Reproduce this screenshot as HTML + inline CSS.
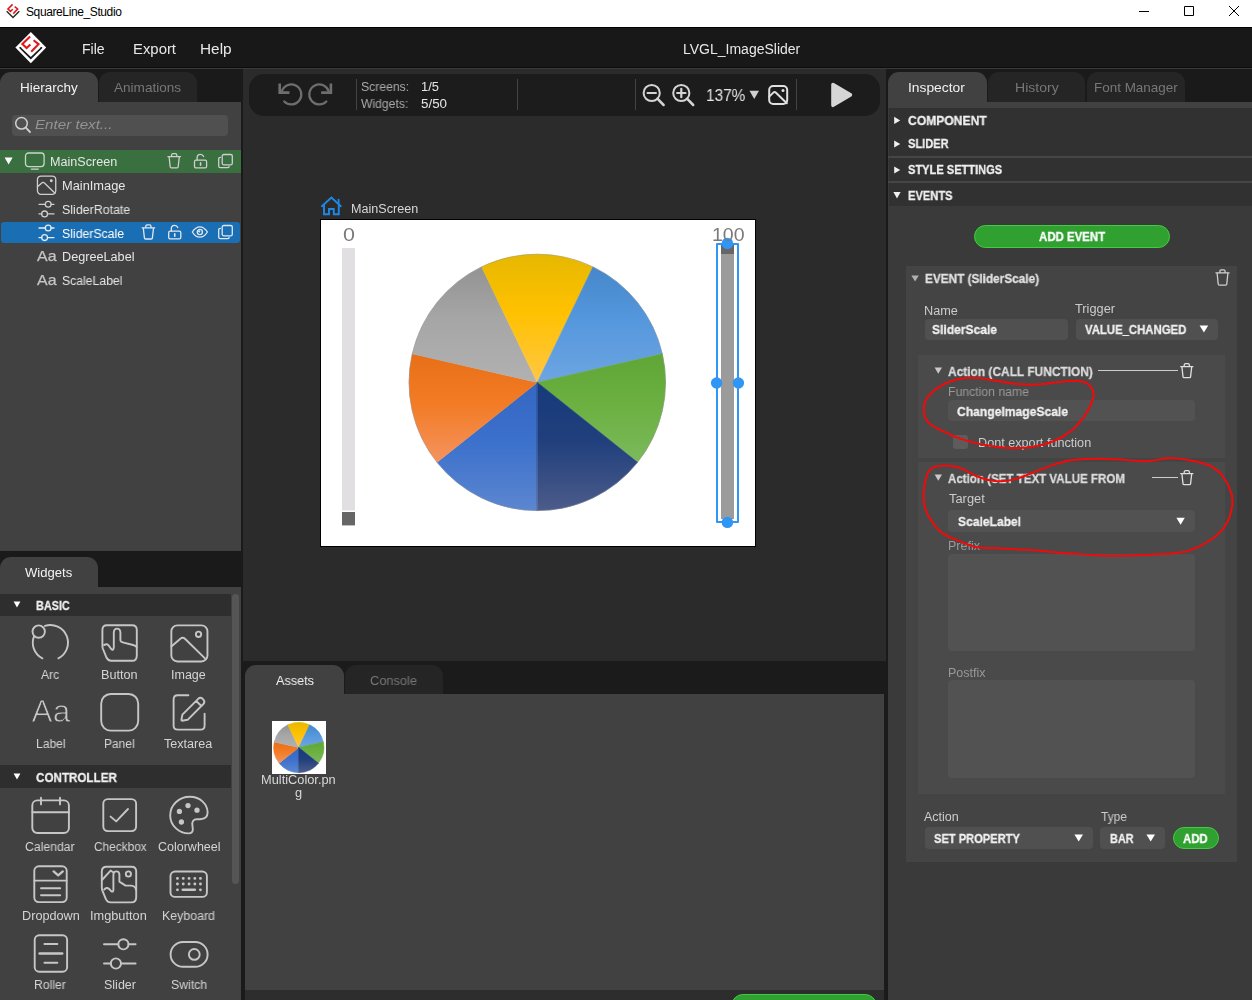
<!DOCTYPE html>
<html lang="en">
<head>
<meta charset="utf-8">
<title>SquareLine_Studio</title>
<style>
*{box-sizing:border-box;margin:0;padding:0}
html,body{width:1252px;height:1000px;overflow:hidden;background:#2b2b2b}
body{font-family:"Liberation Sans",sans-serif}
#app{position:relative;width:1252px;height:1000px;overflow:hidden;background:#2b2b2b}
.b{position:absolute}
.t{position:absolute;white-space:pre;will-change:transform;transform-origin:0 0}
.t.lcd{will-change:auto}
svg{position:absolute;overflow:visible;will-change:transform}
.ic{fill:none;stroke:#d0d0d0;stroke-width:1.5;stroke-linecap:round;stroke-linejoin:round}

</style>
</head>
<body>
<div id="app">
<!-- title bar -->
<div class="b" style="left:0;top:0;width:1252px;height:27px;background:#fff"><span style="position:absolute;left:26px;top:6px;font-size:12px;line-height:12px;color:#000;white-space:pre;letter-spacing:-0.39px">SquareLine_Studio</span></div>
<!-- menu bar -->
<div class="b" style="left:0;top:27px;width:1252px;height:41px;background:#181818"></div>
<div class="b" style="left:0;top:27px;width:1252px;height:1px;background:#000"></div>
<div class="b" style="left:0;top:67px;width:1252px;height:1px;background:#0c0c0c"></div>
<div class="b" style="left:0;top:68px;width:1252px;height:1px;background:#3a3a3a"></div>
<!-- left column -->
<div class="b" style="left:0;top:69px;width:243px;height:931px;background:#1a1a1a"></div>
<div class="b" style="left:0;top:72px;width:98px;height:30px;background:#414141;border-radius:11px 11px 0 0"></div>
<div class="b" style="left:99px;top:72px;width:98px;height:30px;background:#252525;border-radius:11px 11px 0 0"></div>
<div class="b" style="left:0;top:102px;width:241px;height:449px;background:#414141"></div>
<div class="b" style="left:12px;top:115px;width:216px;height:21px;background:#505050;border-radius:4px"></div>
<div class="b" style="left:0;top:150px;width:241px;height:23px;background:#3a6f40"></div>
<div class="b" style="left:1px;top:222px;width:239px;height:21px;background:#1a6eb4;border-radius:3px"></div>
<!-- widgets panel -->
<div class="b" style="left:0;top:557px;width:98px;height:30px;background:#414141;border-radius:11px 11px 0 0"></div>
<div class="b" style="left:0;top:587px;width:241px;height:413px;background:#414141"></div>
<div class="b" style="left:0;top:594px;width:231px;height:22px;background:#2e2e2e"></div>
<div class="b" style="left:0;top:765px;width:231px;height:23px;background:#2e2e2e"></div>
<div class="b" style="left:232px;top:594px;width:7px;height:290px;background:#555;border-radius:4px"></div>
<!-- centre -->
<div class="b" style="left:243px;top:69px;width:643px;height:592px;background:#2b2b2b"></div>
<div class="b" style="left:249px;top:74px;width:631px;height:42px;background:#1c1c1c;border-radius:15px"></div>
<div class="b" style="left:356px;top:79px;width:1px;height:31px;background:#444"></div>
<div class="b" style="left:517px;top:79px;width:1px;height:31px;background:#444"></div>
<div class="b" style="left:635px;top:79px;width:1px;height:31px;background:#444"></div>
<div class="b" style="left:796px;top:79px;width:1px;height:31px;background:#444"></div>
<!-- canvas -->
<div class="b" style="left:320px;top:219px;width:436px;height:328px;background:#000"></div>
<div class="b" style="left:321px;top:220px;width:434px;height:326px;background:#fff"></div>
<!-- assets panel -->
<div class="b" style="left:243px;top:661px;width:643px;height:339px;background:#1b1b1b"></div>
<div class="b" style="left:245px;top:665px;width:99px;height:29px;background:#414141;border-radius:11px 11px 0 0"></div>
<div class="b" style="left:345px;top:665px;width:98px;height:29px;background:#252525;border-radius:11px 11px 0 0"></div>
<div class="b" style="left:245px;top:694px;width:639px;height:296px;background:#414141"></div>
<div class="b" style="left:245px;top:990px;width:639px;height:10px;background:#2d2d2d"></div>
<div class="b" style="left:731px;top:994px;width:146px;height:24px;background:#30a030;border:1.5px solid #42cc42;border-radius:12px"></div>
<div class="b" style="left:272px;top:721px;width:53.5px;height:53px;background:#fff"></div>
<!-- right panel -->
<div class="b" style="left:886px;top:69px;width:366px;height:931px;background:#1a1a1a"></div>
<div class="b" style="left:888px;top:72px;width:99px;height:30px;background:#414141;border-radius:11px 11px 0 0"></div>
<div class="b" style="left:988px;top:72px;width:97px;height:30px;background:#252525;border-radius:11px 11px 0 0"></div>
<div class="b" style="left:1087px;top:72px;width:98px;height:30px;background:#252525;border-radius:11px 11px 0 0"></div>
<div class="b" style="left:888px;top:102px;width:364px;height:898px;background:#3a3a3a"></div>
<div class="b" style="left:888px;top:102px;width:364px;height:6px;background:#414141"></div>
<div class="b" style="left:889px;top:108px;width:363px;height:48px;background:#313131"></div>
<div class="b" style="left:888px;top:156px;width:364px;height:2px;background:#464646"></div>
<div class="b" style="left:889px;top:158px;width:363px;height:23px;background:#313131"></div>
<div class="b" style="left:888px;top:181px;width:364px;height:2px;background:#464646"></div>
<div class="b" style="left:889px;top:183px;width:363px;height:23px;background:#313131"></div>
<div class="b" style="left:974px;top:225px;width:196px;height:23px;background:#30a030;border:1.5px solid #42cc42;border-radius:12px"></div>
<div class="b" style="left:906px;top:266px;width:331px;height:596px;background:#444"></div>
<div class="b" style="left:925px;top:319px;width:143px;height:21px;background:#505050;border-radius:4px"></div>
<div class="b" style="left:1076px;top:319px;width:142px;height:21px;background:#505050;border-radius:4px"></div>
<div class="b" style="left:918px;top:355px;width:307px;height:103px;background:#4a4a4a"></div>
<div class="b" style="left:948px;top:400px;width:247px;height:21px;background:#525252;border-radius:4px"></div>
<div class="b" style="left:953px;top:435px;width:15px;height:14px;background:#5c5c5c;border-radius:3px"></div>
<div class="b" style="left:1098px;top:370px;width:80px;height:1px;background:#ccc"></div>
<div class="b" style="left:918px;top:462px;width:307px;height:332px;background:#4a4a4a"></div>
<div class="b" style="left:948px;top:510px;width:247px;height:22px;background:#525252;border-radius:4px"></div>
<div class="b" style="left:948px;top:554px;width:247px;height:97px;background:#525252;border-radius:4px"></div>
<div class="b" style="left:948px;top:680px;width:247px;height:98px;background:#525252;border-radius:4px"></div>
<div class="b" style="left:1152px;top:477px;width:26px;height:1px;background:#ccc"></div>
<div class="b" style="left:925px;top:827px;width:168px;height:22px;background:#505050;border-radius:4px"></div>
<div class="b" style="left:1100px;top:827px;width:65px;height:22px;background:#505050;border-radius:4px"></div>
<div class="b" style="left:1173px;top:827px;width:46px;height:22px;background:#30a030;border:1.5px solid #42cc42;border-radius:11px"></div>
<svg id="ov" width="1252" height="1000" viewBox="0 0 1252 1000" style="left:0;top:0" fill="none" stroke-linecap="round" stroke-linejoin="round"><path d="M1139 11.5H1149M1184.5 6.5H1193.5V15.5H1184.5ZM1229 6L1239 16M1239 6L1229 16" stroke="#000" stroke-width="1" stroke-linecap="butt"/>
<g transform="translate(13 11.1) scale(0.6)"><path d="M-10.5 0.4L0 10.6L10.5 0.4" stroke="#2a2a2a" stroke-width="2.4" stroke-linecap="butt" stroke-linejoin="miter"/><path d="M-0.7 -11.2L-8.4 -3.5L-4.2 0.5L-0.4 -3M2.8 -7.4L7.7 -3.5L0.4 4.2" stroke="#e01818" stroke-width="2.6" stroke-linejoin="miter" stroke-linecap="butt"/></g>
<g transform="translate(30.8 47.6)"><path d="M0 -15.7L15.4 0L0 15.7L-15.4 0Z" fill="#fff" stroke="none"/><path d="M-10.5 -0.6V0.4L0 10.6L10.5 0.4V-0.6" stroke="#181818" stroke-width="1.7" stroke-linecap="butt" stroke-linejoin="miter"/><path d="M-0.7 -11.2L-8.4 -3.5L-4.2 0.5L-0.4 -3M2.8 -7.4L7.7 -3.5L0.4 4.2" stroke="#e01818" stroke-width="2.1" stroke-linejoin="miter" stroke-linecap="butt"/></g>
<g transform="translate(0 0)" stroke="#cfcfcf" stroke-width="1.5" ><circle cx="21.5" cy="123.3" r="5.8"/><path d="M25.8 127.7L30 132" stroke-width="1.8"/></g>
<path d="M4.6 157.6H12.6L8.6 164.6Z" fill="#fff" stroke="none"/>
<g transform="translate(24.8 152.3)" stroke="#c9d6ca" stroke-width="1.3" ><rect x="0.7" y="0.7" width="18.6" height="13.6" rx="3"/><path d="M6.5 16.8H13.5"/></g>
<g transform="translate(167.2 153)" stroke="#cfcfcf" stroke-width="1.3" ><path d="M0.7 3.6H13.3M4.4 3.4V2.2Q4.4 0.7 5.8 0.7H8.2Q9.6 0.7 9.6 2.2V3.4M1.9 3.8L3 13.7Q3.1 14.8 4.2 14.8H9.8Q10.9 14.8 11 13.7L12.1 3.8"/></g>
<g transform="translate(193.8 153.6)" stroke="#cfcfcf" stroke-width="1.3" ><rect x="0.7" y="6.6" width="12.1" height="7.7" rx="1.5"/><path d="M3.3 6.4V4.2Q3.3 0.8 6.6 0.8Q9 0.8 9.8 2.9"/><path d="M6.75 9.3V11.6" stroke-width="1.6"/></g>
<g transform="translate(218 153.8)" stroke="#cfcfcf" stroke-width="1.3" ><rect x="4.2" y="0.7" width="10.1" height="10.3" rx="1.6"/><path d="M2.4 3.6Q0.7 3.6 0.7 5.3V12.1Q0.7 13.8 2.4 13.8H9.4Q11.1 13.8 11.1 12.6"/></g>
<g transform="translate(36.8 175.4)" stroke="#cfcfcf" stroke-width="1.3" ><rect x="0.65" y="0.65" width="18.3" height="18.3" rx="3.5"/><path d="M0.65 11.37L5.29 7.25Q6.47 6.47 7.64 7.55L18.23 17.93"/><circle cx="14.50" cy="5.29" r="1.47" fill="#cfcfcf" stroke="none"/></g>
<g transform="translate(0 0)" stroke="#cfcfcf" stroke-width="1.3" ><path d="M39 204.3H45.30M51.10 204.3H54M39 213.9H41.70M47.50 213.9H54"/><circle cx="48.20" cy="204.3" r="2.9"/><circle cx="44.60" cy="213.9" r="2.9"/></g>
<g transform="translate(0 0)" stroke="#e6eef6" stroke-width="1.3" ><path d="M39 228H45.30M51.10 228H54M39 237.6H41.70M47.50 237.6H54"/><circle cx="48.20" cy="228" r="2.9"/><circle cx="44.60" cy="237.6" r="2.9"/></g>
<g transform="translate(141.4 224.2)" stroke="#dfe8f0" stroke-width="1.3" ><path d="M0.7 3.6H13.3M4.4 3.4V2.2Q4.4 0.7 5.8 0.7H8.2Q9.6 0.7 9.6 2.2V3.4M1.9 3.8L3 13.7Q3.1 14.8 4.2 14.8H9.8Q10.9 14.8 11 13.7L12.1 3.8"/></g>
<g transform="translate(168 224.6)" stroke="#dfe8f0" stroke-width="1.3" ><rect x="0.7" y="6.6" width="12.1" height="7.7" rx="1.5"/><path d="M3.3 6.4V4.2Q3.3 0.8 6.6 0.8Q9 0.8 9.8 2.9"/><path d="M6.75 9.3V11.6" stroke-width="1.6"/></g>
<g transform="translate(191.6 226)" stroke="#dfe8f0" stroke-width="1.3" ><path d="M0.7 6Q4 0.8 8.25 0.8Q12.5 0.8 15.8 6Q12.5 11.2 8.25 11.2Q4 11.2 0.7 6Z"/><circle cx="8.25" cy="6" r="2.6"/><circle cx="7.6" cy="5.4" r="0.5"/></g>
<g transform="translate(218 224.8)" stroke="#dfe8f0" stroke-width="1.3" ><rect x="4.2" y="0.7" width="10.1" height="10.3" rx="1.6"/><path d="M2.4 3.6Q0.7 3.6 0.7 5.3V12.1Q0.7 13.8 2.4 13.8H9.4Q11.1 13.8 11.1 12.6"/></g>
<text x="37" y="261" font-family="'Liberation Sans',sans-serif" font-size="15" fill="#c4c4c4" stroke="#c4c4c4" stroke-width="0.25" textLength="19.5" lengthAdjust="spacingAndGlyphs">Aa</text>
<text x="37" y="285" font-family="'Liberation Sans',sans-serif" font-size="15" fill="#c4c4c4" stroke="#c4c4c4" stroke-width="0.25" textLength="19.5" lengthAdjust="spacingAndGlyphs">Aa</text>
<g transform="translate(291.3 94.4)" stroke="#6e6e6e" stroke-width="2.2"><path d="M-9.56 -2.92A10 10 0 1 1 -7.07 7.07"/><path d="M-11.60 -11.00V-1.8H-1.80" stroke-width="2.6" stroke-linecap="butt" stroke-linejoin="miter"/></g>
<g transform="translate(319.3 94.4) scale(-1 1)" stroke="#6e6e6e" stroke-width="2.2"><path d="M-9.56 -2.92A10 10 0 1 1 -7.07 7.07"/><path d="M-11.60 -11.00V-1.8H-1.80" stroke-width="2.6" stroke-linecap="butt" stroke-linejoin="miter"/></g>
<g transform="translate(0 0)" stroke="#d4d4d4" stroke-width="2.0" ><circle cx="651.7" cy="93" r="8.1"/><path d="M657.43 98.73L663.6 105" stroke-width="2.5"/><path d="M647.5 93H655.9000000000001" stroke-width="2.2"/></g>
<g transform="translate(0 0)" stroke="#d4d4d4" stroke-width="2.0" ><circle cx="681.3" cy="93" r="8.1"/><path d="M687.03 98.73L693.2 105" stroke-width="2.5"/><path d="M677.0999999999999 93H685.5M681.3 88.8V97.2" stroke-width="2.2"/></g>
<path d="M749.5 90.8H759.0L754.25 99.0Z" fill="#cfcfcf" stroke="none"/>
<g transform="translate(768.2 85)" stroke="#e0e0e0" stroke-width="2.0" ><rect x="1.0" y="1.0" width="18.0" height="18.0" rx="4"/><path d="M1.0 11.60L5.40 7.40Q6.60 6.60 7.80 7.70L18.60 18.30"/><circle cx="14.80" cy="5.40" r="1.50" fill="#e0e0e0" stroke="none"/></g>
<path d="M833 84.6L850.4 94.9L833 105.3Z" fill="#d6d6d6" stroke="#d6d6d6" stroke-width="3.6" stroke-linejoin="round"/>
<g transform="translate(321 196.6)" stroke="#1e88e5" stroke-width="1.9" ><path d="M0.9 9.6L10.4 0.9L19.9 9.6" stroke-linejoin="miter"/><path d="M17.6 7.2V3.2"/><path d="M3 8.4V17.6H8V12.4H12.8V17.6H17.8V8.4" stroke-linejoin="miter"/></g>
<rect x="342" y="248" width="13" height="262.5" fill="#e2dfe3"/><rect x="342" y="512" width="13" height="13.4" fill="#666"/>
<rect x="721" y="245" width="13" height="274" fill="#9b9b9b"/><rect x="721" y="245" width="13" height="9" fill="#666"/>
<defs><linearGradient id="pb" x1="0" y1="0" x2="0" y2="1"><stop offset="0" stop-color="#3567c2"/><stop offset="0.45" stop-color="#3b70cc"/><stop offset="1" stop-color="#5c86d0"/></linearGradient><linearGradient id="po" x1="0" y1="0" x2="0" y2="1"><stop offset="0" stop-color="#e66f17"/><stop offset="0.45" stop-color="#f27b23"/><stop offset="1" stop-color="#f5935f"/></linearGradient><linearGradient id="pg" x1="0" y1="0" x2="0" y2="1"><stop offset="0" stop-color="#939393"/><stop offset="0.45" stop-color="#a6a6a6"/><stop offset="1" stop-color="#b1b1b1"/></linearGradient><linearGradient id="py" x1="0" y1="0" x2="0" y2="1"><stop offset="0" stop-color="#e6b800"/><stop offset="0.45" stop-color="#ffc100"/><stop offset="1" stop-color="#ffc744"/></linearGradient><linearGradient id="pl" x1="0" y1="0" x2="0" y2="1"><stop offset="0" stop-color="#4687cb"/><stop offset="0.45" stop-color="#5597dc"/><stop offset="1" stop-color="#6ca5e2"/></linearGradient><linearGradient id="pn" x1="0" y1="0" x2="0" y2="1"><stop offset="0" stop-color="#5fa636"/><stop offset="0.45" stop-color="#6bb040"/><stop offset="1" stop-color="#7cb95c"/></linearGradient><linearGradient id="pd" x1="0" y1="0" x2="0" y2="1"><stop offset="0" stop-color="#173a7c"/><stop offset="0.45" stop-color="#203f7c"/><stop offset="1" stop-color="#4c5c8a"/></linearGradient></defs><path d="M537.30 382.40L537.30 510.60A128.2 128.2 0 0 1 437.07 462.33Z" fill="url(#pb)" stroke="url(#pb)" stroke-width="0.6" stroke-linejoin="round"/><path d="M537.30 382.40L437.07 462.33A128.2 128.2 0 0 1 412.31 353.87Z" fill="url(#po)" stroke="url(#po)" stroke-width="0.6" stroke-linejoin="round"/><path d="M537.30 382.40L412.32 353.87A128.2 128.2 0 0 1 481.68 266.89Z" fill="url(#pg)" stroke="url(#pg)" stroke-width="0.6" stroke-linejoin="round"/><path d="M537.30 382.40L481.68 266.89A128.2 128.2 0 0 1 592.93 266.90Z" fill="url(#py)" stroke="url(#py)" stroke-width="0.6" stroke-linejoin="round"/><path d="M537.30 382.40L592.92 266.89A128.2 128.2 0 0 1 662.28 353.86Z" fill="url(#pl)" stroke="url(#pl)" stroke-width="0.6" stroke-linejoin="round"/><path d="M537.30 382.40L662.28 353.87A128.2 128.2 0 0 1 637.53 462.33Z" fill="url(#pn)" stroke="url(#pn)" stroke-width="0.6" stroke-linejoin="round"/><path d="M537.30 382.40L637.53 462.33A128.2 128.2 0 0 1 537.30 510.60Z" fill="url(#pd)" stroke="url(#pd)" stroke-width="0.6" stroke-linejoin="round"/><circle cx="537.3" cy="382.4" r="128.2" fill="none" stroke="#8a8f96" stroke-opacity="0.55" stroke-width="0.8"/>
<rect x="717" y="244" width="21" height="278" fill="none" stroke="#2f96f6" stroke-width="2"/>
<circle cx="727.4" cy="243.4" r="5.7" fill="#2f96f6"/>
<circle cx="727.4" cy="522.4" r="5.7" fill="#2f96f6"/>
<circle cx="716.6" cy="383" r="5.7" fill="#2f96f6"/>
<circle cx="738.4" cy="383" r="5.7" fill="#2f96f6"/>
<g transform="translate(298.8 747.5) scale(0.196)"><defs><linearGradient id="qb" x1="0" y1="0" x2="0" y2="1"><stop offset="0" stop-color="#3567c2"/><stop offset="0.45" stop-color="#3b70cc"/><stop offset="1" stop-color="#5c86d0"/></linearGradient><linearGradient id="qo" x1="0" y1="0" x2="0" y2="1"><stop offset="0" stop-color="#e66f17"/><stop offset="0.45" stop-color="#f27b23"/><stop offset="1" stop-color="#f5935f"/></linearGradient><linearGradient id="qg" x1="0" y1="0" x2="0" y2="1"><stop offset="0" stop-color="#939393"/><stop offset="0.45" stop-color="#a6a6a6"/><stop offset="1" stop-color="#b1b1b1"/></linearGradient><linearGradient id="qy" x1="0" y1="0" x2="0" y2="1"><stop offset="0" stop-color="#e6b800"/><stop offset="0.45" stop-color="#ffc100"/><stop offset="1" stop-color="#ffc744"/></linearGradient><linearGradient id="ql" x1="0" y1="0" x2="0" y2="1"><stop offset="0" stop-color="#4687cb"/><stop offset="0.45" stop-color="#5597dc"/><stop offset="1" stop-color="#6ca5e2"/></linearGradient><linearGradient id="qn" x1="0" y1="0" x2="0" y2="1"><stop offset="0" stop-color="#5fa636"/><stop offset="0.45" stop-color="#6bb040"/><stop offset="1" stop-color="#7cb95c"/></linearGradient><linearGradient id="qd" x1="0" y1="0" x2="0" y2="1"><stop offset="0" stop-color="#173a7c"/><stop offset="0.45" stop-color="#203f7c"/><stop offset="1" stop-color="#4c5c8a"/></linearGradient></defs><path d="M0.00 0.00L0.00 128.20A128.2 128.2 0 0 1 -100.23 79.93Z" fill="url(#qb)" stroke="url(#qb)" stroke-width="3" stroke-linejoin="round"/><path d="M0.00 0.00L-100.23 79.93A128.2 128.2 0 0 1 -124.99 -28.53Z" fill="url(#qo)" stroke="url(#qo)" stroke-width="3" stroke-linejoin="round"/><path d="M0.00 0.00L-124.98 -28.53A128.2 128.2 0 0 1 -55.62 -115.51Z" fill="url(#qg)" stroke="url(#qg)" stroke-width="3" stroke-linejoin="round"/><path d="M0.00 0.00L-55.62 -115.51A128.2 128.2 0 0 1 55.63 -115.50Z" fill="url(#qy)" stroke="url(#qy)" stroke-width="3" stroke-linejoin="round"/><path d="M0.00 0.00L55.62 -115.51A128.2 128.2 0 0 1 124.98 -28.54Z" fill="url(#ql)" stroke="url(#ql)" stroke-width="3" stroke-linejoin="round"/><path d="M0.00 0.00L124.98 -28.53A128.2 128.2 0 0 1 100.23 79.93Z" fill="url(#qn)" stroke="url(#qn)" stroke-width="3" stroke-linejoin="round"/><path d="M0.00 0.00L100.23 79.93A128.2 128.2 0 0 1 0.00 128.20Z" fill="url(#qd)" stroke="url(#qd)" stroke-width="3" stroke-linejoin="round"/></g>
<path d="M894.2 116.8L900.2 120.39999999999999L894.2 124.0Z" fill="#f0f0f0" stroke="none"/>
<path d="M894.2 140.4L900.2 144.0L894.2 147.6Z" fill="#f0f0f0" stroke="none"/>
<path d="M894.2 166.4L900.2 170.0L894.2 173.6Z" fill="#f0f0f0" stroke="none"/>
<path d="M893.4 192H900.6L897.0 198.4Z" fill="#f0f0f0" stroke="none"/>
<path d="M911.4 275.4H918.8L915.1 281.59999999999997Z" fill="#b0b0b0" stroke="none"/>
<path d="M934.6 367.6H942.0L938.3000000000001 373.8Z" fill="#c8c8c8" stroke="none"/>
<path d="M934.6 474.6H942.0L938.3000000000001 480.8Z" fill="#c8c8c8" stroke="none"/>
<g transform="translate(1215.2 269.2)" stroke="#cfcfcf" stroke-width="1.3" ><path d="M0.7 3.6H13.9M4.699999999999999 3.4V2.2Q4.699999999999999 0.7 6.1 0.7H8.5Q9.9 0.7 9.9 2.2V3.4M1.9 3.8L3 14.8Q3.1 15.900000000000002 4.2 15.900000000000002H10.399999999999999Q11.5 15.900000000000002 11.6 14.8L12.7 3.8"/></g>
<g transform="translate(1180 363)" stroke="#e0e0e0" stroke-width="1.3" ><path d="M0.7 3.6H12.9M4.199999999999999 3.4V2.2Q4.199999999999999 0.7 5.6 0.7H8.0Q9.4 0.7 9.4 2.2V3.4M1.9 3.8L3 13.6Q3.1 14.700000000000001 4.2 14.700000000000001H9.399999999999999Q10.5 14.700000000000001 10.6 13.6L11.7 3.8"/></g>
<g transform="translate(1180 470)" stroke="#e0e0e0" stroke-width="1.3" ><path d="M0.7 3.6H12.9M4.199999999999999 3.4V2.2Q4.199999999999999 0.7 5.6 0.7H8.0Q9.4 0.7 9.4 2.2V3.4M1.9 3.8L3 13.6Q3.1 14.700000000000001 4.2 14.700000000000001H9.399999999999999Q10.5 14.700000000000001 10.6 13.6L11.7 3.8"/></g>
<path d="M1199.6 325.6H1208.1999999999998L1203.8999999999999 332.6Z" fill="#fff" stroke="none"/>
<path d="M1176.4 517.8H1184.8000000000002L1180.6000000000001 524.8Z" fill="#fff" stroke="none"/>
<path d="M1074.4 834.4H1083.0L1078.7 841.4Z" fill="#fff" stroke="none"/>
<path d="M1146.4 834.4H1155.0L1150.7 841.4Z" fill="#fff" stroke="none"/>
<path d="M13.6 601.6H20.4L17.0 607.6Z" fill="#fff" stroke="none"/>
<path d="M13.6 773.4H20.4L17.0 779.4Z" fill="#fff" stroke="none"/>
<g transform="translate(0 0)" stroke="#c6c6c6" stroke-width="1.9" ><path d="M42.41 658.38A17.6 17.6 0 0 1 34.08 636.11M44.96 625.96A17.6 17.6 0 0 1 58.39 658.38"/><circle cx="38.7" cy="631.6" r="6.2"/></g>
<g transform="translate(101.6 624.4)" stroke="#c6c6c6" stroke-width="1.9" ><path d="M5.5 0.8H30.5Q35.2 0.8 35.2 5.5V31Q35.2 36.4 30.5 36.4H9.5Q6.6 36.4 5 33.4L1.4 24.6Q0.8 23 0.8 21V5.5Q0.8 0.8 5.5 0.8Z"/><path d="M2.5 20.7Q5 19 7 21L9.6 24.6Q11.9 26.6 12.2 23V8Q12.4 4.2 15.5 4.2Q18.6 4.2 18.8 8V16Q19 17.6 21 17.9L31.5 20.6Q34.6 21.4 35.2 23"/></g>
<g transform="translate(170.4 624.4)" stroke="#c6c6c6" stroke-width="1.9" ><rect x="0.95" y="0.95" width="36.1" height="36.1" rx="6"/><path d="M0.95 22.04L10.26 14.06Q12.54 12.54 14.82 14.63L35.34 34.77"/><circle cx="28.12" cy="9.88" r="2.66"/></g>
<text x="31.6" y="721.6" font-family="'Liberation Sans',sans-serif" font-size="30.5" fill="#c6c6c6" stroke="#414141" stroke-width="0.8" textLength="38.6" lengthAdjust="spacingAndGlyphs">Aa</text>
<g transform="translate(0 0)" stroke="#c6c6c6" stroke-width="1.9" ><rect x="101.2" y="694" width="37" height="36.6" rx="9.5"/></g>
<g transform="translate(172.8 694.4)" stroke="#c6c6c6" stroke-width="1.9" ><path d="M15.6 0.8H5Q0.8 0.8 0.8 5V31Q0.8 35.2 5 35.2H28Q31.8 35.2 31.8 31V19.4"/><path d="M8.6 25.6L9.6 20.2L25.4 4.4Q27.6 2.4 29.8 4.4L30.6 5.2Q32.6 7.4 30.6 9.6L14.8 25.4L9.4 26.4ZM23.4 6.6L28.6 11.6"/></g>
<g transform="translate(31.6 797)" stroke="#c6c6c6" stroke-width="1.9" ><rect x="0.7" y="3.4" width="36.6" height="32.6" rx="5"/><path d="M0.8 15.2H37.2M9.4 0.8V7.4M28.4 0.8V7.4"/></g>
<g transform="translate(102.6 798.4)" stroke="#c6c6c6" stroke-width="1.9" ><rect x="0.7" y="0.7" width="32.8" height="32" rx="4.5"/><path d="M8 18.2L13.6 23L25.4 10.6"/></g>
<g transform="translate(169.4 796)" stroke="#c6c6c6" stroke-width="1.9" ><path d="M20.5 0.8C31 0.8 38.2 8.4 38.2 16.6C38.2 21.6 34.6 23.2 30.6 23.2H27.4C23.8 23.2 22.4 25.8 23 29.4L23.4 32.6C23.8 36 21.8 37.4 19.4 37.4C9.4 37.4 0.8 29.2 0.8 19.4C0.8 9 9.4 0.8 20.5 0.8Z"/><circle cx="10" cy="15.4" r="1.7" fill="#c9c9c9"/><circle cx="18.6" cy="9.6" r="1.7" fill="#c9c9c9"/><circle cx="27.6" cy="14.2" r="1.7" fill="#c9c9c9"/><circle cx="12" cy="26" r="1.7" fill="#c9c9c9"/></g>
<g transform="translate(33.6 865.6)" stroke="#c6c6c6" stroke-width="1.9" ><rect x="0.7" y="0.7" width="32.4" height="35.8" rx="4.5"/><path d="M0.8 15H33M7.4 22.6H26.6M7.4 29.6H26.6"/><path d="M20 5.8L24.6 9.8L29.2 5.8" stroke-width="2.3"/></g>
<g transform="translate(101 866)" stroke="#c6c6c6" stroke-width="1.9" ><path d="M5.5 0.8H30.5Q35.2 0.8 35.2 5.5V31Q35.2 36.4 30.5 36.4H9.5Q6.6 36.4 5 33.4L1.4 24.6Q0.8 23 0.8 21V5.5Q0.8 0.8 5.5 0.8Z"/><path d="M1 14L9.6 4.6L12.4 6.6M3.2 23.6Q5.6 20.6 8.2 23L10.4 25.4Q12.4 26.4 12.4 23.6V8.8Q12.4 5.4 15.4 5.4Q18.4 5.4 18.4 8.8V15.6L24.6 19.6H30Q34.6 19.8 35 24"/><circle cx="27.4" cy="8" r="2.6"/></g>
<g transform="translate(169.8 870.8)" stroke="#c6c6c6" stroke-width="1.9" ><rect x="0.7" y="0.7" width="36.4" height="25.4" rx="4.5"/><path d="M7.6 7.6h.1M13.4 7.6h.1M19.2 7.6h.1M25 7.6h.1M30.6 7.6h.1M7.6 13.2h.1M13.4 13.2h.1M19.2 13.2h.1M25 13.2h.1M30.6 13.2h.1M7.6 19h.1M30.6 19h.1" stroke-width="2.8"/><path d="M13 19H25" stroke-width="2.6"/></g>
<g transform="translate(34 934.6)" stroke="#c6c6c6" stroke-width="1.9" ><rect x="0.7" y="0.7" width="32.4" height="36.4" rx="4.5"/><path d="M10.4 9.4H23.4M10.4 28.2H23.4"/><path d="M5.6 18.8H28.2" stroke-width="2.5"/></g>
<g transform="translate(0 0)" stroke="#c6c6c6" stroke-width="1.9" ><path d="M104 944.3H118.30M128.50 944.3H135.6M104 963.5H110.80M121.00 963.5H135.6"/><circle cx="123.40" cy="944.3" r="5.1"/><circle cx="115.90" cy="963.5" r="5.1"/></g>
<g transform="translate(0 0)" stroke="#c6c6c6" stroke-width="1.9" ><rect x="170.6" y="942" width="37" height="24.8" rx="12.4"/><circle cx="194.3" cy="954.4" r="5.4"/></g></svg>
<div id="texts">
<span class="t" style="left:81.57px;top:42.00px;font-size:14px;line-height:14px;color:#e8e8e8;letter-spacing:0.000px;transform:scaleX(1.0046)">File</span>
<span class="t" style="left:132.64px;top:42.00px;font-size:14px;line-height:14px;color:#e8e8e8;letter-spacing:0.000px;transform:scaleX(1.0629)">Export</span>
<span class="t" style="left:199.55px;top:42.00px;font-size:14px;line-height:14px;color:#e8e8e8;letter-spacing:0.000px;transform:scaleX(1.0973)">Help</span>
<span class="t" style="left:683.41px;top:42.00px;font-size:14px;line-height:14px;color:#e8e8e8;letter-spacing:0.000px;transform:scaleX(0.9967)">LVGL_ImageSlider</span>
<span class="t" style="left:19.78px;top:81.00px;font-size:13px;line-height:13px;color:#f2f2f2;letter-spacing:0.000px;transform:scaleX(1.0360)">Hierarchy</span>
<span class="t" style="left:114.39px;top:81.00px;font-size:13px;line-height:13px;color:#777;letter-spacing:0.000px;transform:scaleX(1.0441)">Animations</span>
<span class="t" style="left:908.33px;top:81.00px;font-size:13px;line-height:13px;color:#f2f2f2;letter-spacing:0.000px;transform:scaleX(1.0622)">Inspector</span>
<span class="t" style="left:1014.69px;top:81.00px;font-size:13px;line-height:13px;color:#777;letter-spacing:0.000px;transform:scaleX(1.0803)">History</span>
<span class="t" style="left:1093.78px;top:81.00px;font-size:13px;line-height:13px;color:#777;letter-spacing:0.000px;transform:scaleX(1.0338)">Font Manager</span>
<span class="t" style="left:24.97px;top:566.00px;font-size:13px;line-height:13px;color:#f2f2f2;letter-spacing:0.000px;transform:scaleX(1.0059)">Widgets</span>
<span class="t" style="left:276.00px;top:674.00px;font-size:13px;line-height:13px;color:#f2f2f2;letter-spacing:0.000px;transform:scaleX(0.9720)">Assets</span>
<span class="t" style="left:370.31px;top:674.00px;font-size:13px;line-height:13px;color:#777;letter-spacing:0.000px;transform:scaleX(0.9863)">Console</span>
<span class="t" style="left:35.47px;top:117.75px;font-size:13.5px;line-height:13.5px;color:#939393;letter-spacing:0.000px;font-style:italic;transform:scaleX(1.1224)">Enter text...</span>
<span class="t" style="left:49.92px;top:155.75px;font-size:12.5px;line-height:12.5px;color:#e6e6e6;letter-spacing:0.000px;transform:scaleX(1.0072)">MainScreen</span>
<span class="t" style="left:61.88px;top:179.75px;font-size:12.5px;line-height:12.5px;color:#e6e6e6;letter-spacing:0.000px;transform:scaleX(1.0263)">MainImage</span>
<span class="t" style="left:61.99px;top:203.75px;font-size:12.5px;line-height:12.5px;color:#e6e6e6;letter-spacing:0.000px;transform:scaleX(0.9924)">SliderRotate</span>
<span class="t" style="left:61.99px;top:227.75px;font-size:12.5px;line-height:12.5px;color:#fff;letter-spacing:0.000px;transform:scaleX(0.9826)">SliderScale</span>
<span class="t" style="left:61.91px;top:250.75px;font-size:12.5px;line-height:12.5px;color:#e6e6e6;letter-spacing:0.000px;transform:scaleX(1.0127)">DegreeLabel</span>
<span class="t" style="left:61.99px;top:274.75px;font-size:12.5px;line-height:12.5px;color:#e6e6e6;letter-spacing:0.000px;transform:scaleX(0.9772)">ScaleLabel</span>
<span class="t" style="left:360.99px;top:80.75px;font-size:12.5px;line-height:12.5px;color:#aaa;letter-spacing:0.000px;transform:scaleX(0.9760)">Screens:</span>
<span class="t" style="left:421.20px;top:80.75px;font-size:12.5px;line-height:12.5px;color:#e6e6e6;letter-spacing:0.000px;transform:scaleX(1.0309)">1/5</span>
<span class="t" style="left:361.48px;top:97.75px;font-size:12.5px;line-height:12.5px;color:#aaa;letter-spacing:0.000px;transform:scaleX(0.9703)">Widgets:</span>
<span class="t" style="left:421.00px;top:97.75px;font-size:12.5px;line-height:12.5px;color:#e6e6e6;letter-spacing:0.000px;transform:scaleX(1.0700)">5/50</span>
<span class="t" style="left:706.31px;top:87.00px;font-size:17px;line-height:17px;color:#e6e6e6;letter-spacing:0.000px;transform:scaleX(0.9064)">137%</span>
<span class="t" style="left:350.92px;top:202.75px;font-size:12.5px;line-height:12.5px;color:#d8d8d8;letter-spacing:0.000px;transform:scaleX(1.0072)">MainScreen</span>
<span class="t" style="left:908.21px;top:114.00px;font-size:13px;line-height:13px;color:#f0f0f0;letter-spacing:0.000px;font-weight:700;-webkit-text-stroke:0.3px #f0f0f0;transform:scaleX(0.9313)">COMPONENT</span>
<span class="t" style="left:908.00px;top:137.00px;font-size:13px;line-height:13px;color:#f0f0f0;letter-spacing:0.000px;font-weight:700;-webkit-text-stroke:0.3px #f0f0f0;transform:scaleX(0.8530)">SLIDER</span>
<span class="t" style="left:908.00px;top:163.00px;font-size:13px;line-height:13px;color:#f0f0f0;letter-spacing:0.000px;font-weight:700;-webkit-text-stroke:0.3px #f0f0f0;transform:scaleX(0.8522)">STYLE SETTINGS</span>
<span class="t" style="left:907.64px;top:189.00px;font-size:13px;line-height:13px;color:#f0f0f0;letter-spacing:0.000px;font-weight:700;-webkit-text-stroke:0.3px #f0f0f0;transform:scaleX(0.8571)">EVENTS</span>
<span class="t" style="left:1038.59px;top:230.00px;font-size:13px;line-height:13px;color:#fff;letter-spacing:0.000px;font-weight:700;-webkit-text-stroke:0.3px #fff;transform:scaleX(0.8805)">ADD EVENT</span>
<span class="t" style="left:925.36px;top:272.00px;font-size:13px;line-height:13px;color:#e0e0e0;letter-spacing:0.000px;font-weight:700;-webkit-text-stroke:0.3px #e0e0e0;transform:scaleX(0.9069)">EVENT (SliderScale)</span>
<span class="t" style="left:923.91px;top:304.75px;font-size:12.5px;line-height:12.5px;color:#ccc;letter-spacing:0.000px;transform:scaleX(1.0168)">Name</span>
<span class="t" style="left:1075.48px;top:302.75px;font-size:12.5px;line-height:12.5px;color:#ccc;letter-spacing:0.000px;transform:scaleX(1.0219)">Trigger</span>
<span class="t" style="left:931.96px;top:323.00px;font-size:13px;line-height:13px;color:#f0f0f0;letter-spacing:0.000px;font-weight:700;-webkit-text-stroke:0.3px #f0f0f0;transform:scaleX(0.9287)">SliderScale</span>
<span class="t" style="left:1084.66px;top:323.00px;font-size:13px;line-height:13px;color:#f0f0f0;letter-spacing:0.000px;font-weight:700;-webkit-text-stroke:0.3px #f0f0f0;transform:scaleX(0.8728)">VALUE_CHANGED</span>
<span class="t" style="left:948.46px;top:365.00px;font-size:13px;line-height:13px;color:#dcdcdc;letter-spacing:0.000px;font-weight:700;-webkit-text-stroke:0.3px #dcdcdc;transform:scaleX(0.9175)">Action (CALL FUNCTION)</span>
<span class="t" style="left:948.13px;top:385.75px;font-size:12.5px;line-height:12.5px;color:#999;letter-spacing:0.000px;transform:scaleX(0.9796)">Function name</span>
<span class="t" style="left:957.21px;top:405.00px;font-size:13px;line-height:13px;color:#f0f0f0;letter-spacing:0.000px;font-weight:700;-webkit-text-stroke:0.3px #f0f0f0;transform:scaleX(0.9315)">ChangeImageScale</span>
<span class="t" style="left:977.71px;top:436.75px;font-size:12.5px;line-height:12.5px;color:#ccc;letter-spacing:0.000px;transform:scaleX(1.0118)">Dont export function</span>
<span class="t" style="left:948.29px;top:472.00px;font-size:13px;line-height:13px;color:#dcdcdc;letter-spacing:0.000px;font-weight:700;-webkit-text-stroke:0.3px #dcdcdc;transform:scaleX(0.8887)">Action (SET TEXT VALUE FROM</span>
<span class="t" style="left:949.46px;top:492.75px;font-size:12.5px;line-height:12.5px;color:#ccc;letter-spacing:0.000px;transform:scaleX(1.0301)">Target</span>
<span class="t" style="left:957.56px;top:515.00px;font-size:13px;line-height:13px;color:#f0f0f0;letter-spacing:0.000px;font-weight:700;-webkit-text-stroke:0.3px #f0f0f0;transform:scaleX(0.9279)">ScaleLabel</span>
<span class="t" style="left:948.13px;top:539.75px;font-size:12.5px;line-height:12.5px;color:#999;letter-spacing:0.000px;transform:scaleX(0.9852)">Prefix</span>
<span class="t" style="left:947.73px;top:666.75px;font-size:12.5px;line-height:12.5px;color:#999;letter-spacing:0.000px;transform:scaleX(0.9912)">Postfix</span>
<span class="t" style="left:923.62px;top:810.75px;font-size:12.5px;line-height:12.5px;color:#ccc;letter-spacing:0.000px;transform:scaleX(0.9896)">Action</span>
<span class="t" style="left:1101.28px;top:810.75px;font-size:12.5px;line-height:12.5px;color:#ccc;letter-spacing:0.000px;transform:scaleX(0.9548)">Type</span>
<span class="t" style="left:933.70px;top:832.00px;font-size:13px;line-height:13px;color:#f0f0f0;letter-spacing:0.000px;font-weight:700;-webkit-text-stroke:0.3px #f0f0f0;transform:scaleX(0.8552)">SET PROPERTY</span>
<span class="t" style="left:1110.43px;top:832.00px;font-size:13px;line-height:13px;color:#f0f0f0;letter-spacing:0.000px;font-weight:700;-webkit-text-stroke:0.3px #f0f0f0;transform:scaleX(0.8354)">BAR</span>
<span class="t" style="left:1183.29px;top:832.00px;font-size:13px;line-height:13px;color:#fff;letter-spacing:0.000px;font-weight:700;-webkit-text-stroke:0.3px #fff;transform:scaleX(0.8714)">ADD</span>
<span class="t" style="left:36.43px;top:599.00px;font-size:13px;line-height:13px;color:#f0f0f0;letter-spacing:0.000px;font-weight:700;-webkit-text-stroke:0.3px #f0f0f0;transform:scaleX(0.8340)">BASIC</span>
<span class="t" style="left:36.01px;top:771.00px;font-size:13px;line-height:13px;color:#f0f0f0;letter-spacing:0.000px;font-weight:700;-webkit-text-stroke:0.3px #f0f0f0;transform:scaleX(0.8955)">CONTROLLER</span>
<span class="t" style="left:260.87px;top:773.75px;font-size:12.5px;line-height:12.5px;color:#d8d8d8;letter-spacing:0.000px;transform:scaleX(1.0244)">MultiColor.pn</span>
<span class="t" style="left:294.94px;top:786.75px;font-size:12.5px;line-height:12.5px;color:#d8d8d8;letter-spacing:0.000px;transform:scaleX(1.0246)">g</span>
<span class="t" style="left:40.62px;top:668.75px;font-size:12.5px;line-height:12.5px;color:#d4d4d4;letter-spacing:0.000px;transform:scaleX(0.9690)">Arc</span>
<span class="t" style="left:101.10px;top:668.75px;font-size:12.5px;line-height:12.5px;color:#d4d4d4;letter-spacing:0.000px;transform:scaleX(1.0150)">Button</span>
<span class="t" style="left:171.08px;top:668.75px;font-size:12.5px;line-height:12.5px;color:#d4d4d4;letter-spacing:0.000px">Image</span>
<span class="t" style="left:35.93px;top:737.75px;font-size:12.5px;line-height:12.5px;color:#d4d4d4;letter-spacing:0.000px;transform:scaleX(0.9694)">Label</span>
<span class="t" style="left:104.13px;top:737.75px;font-size:12.5px;line-height:12.5px;color:#d4d4d4;letter-spacing:0.000px;transform:scaleX(0.9561)">Panel</span>
<span class="t" style="left:164.48px;top:737.75px;font-size:12.5px;line-height:12.5px;color:#d4d4d4;letter-spacing:0.000px;transform:scaleX(1.0074)">Textarea</span>
<span class="t" style="left:25.18px;top:840.75px;font-size:12.5px;line-height:12.5px;color:#d4d4d4;letter-spacing:0.000px;transform:scaleX(0.9797)">Calendar</span>
<span class="t" style="left:93.68px;top:840.75px;font-size:12.5px;line-height:12.5px;color:#d4d4d4;letter-spacing:0.000px;transform:scaleX(0.9478)">Checkbox</span>
<span class="t" style="left:157.98px;top:840.75px;font-size:12.5px;line-height:12.5px;color:#d4d4d4;letter-spacing:0.000px">Colorwheel</span>
<span class="t" style="left:21.91px;top:909.75px;font-size:12.5px;line-height:12.5px;color:#d4d4d4;letter-spacing:0.000px;transform:scaleX(1.0150)">Dropdown</span>
<span class="t" style="left:90.35px;top:909.75px;font-size:12.5px;line-height:12.5px;color:#d4d4d4;letter-spacing:0.000px;transform:scaleX(1.0203)">Imgbutton</span>
<span class="t" style="left:161.73px;top:909.75px;font-size:12.5px;line-height:12.5px;color:#d4d4d4;letter-spacing:0.000px;transform:scaleX(0.9891)">Keyboard</span>
<span class="t" style="left:34.43px;top:978.75px;font-size:12.5px;line-height:12.5px;color:#d4d4d4;letter-spacing:0.000px;transform:scaleX(0.9751)">Roller</span>
<span class="t" style="left:103.99px;top:978.75px;font-size:12.5px;line-height:12.5px;color:#d4d4d4;letter-spacing:0.000px;transform:scaleX(0.9871)">Slider</span>
<span class="t" style="left:171.09px;top:978.75px;font-size:12.5px;line-height:12.5px;color:#d4d4d4;letter-spacing:0.000px;transform:scaleX(0.9835)">Switch</span>
<span class="t" style="left:343.00px;top:225.00px;font-size:19px;line-height:19px;color:#7a7a7a;letter-spacing:0.000px;transform:scaleX(1.1310)">0</span>
<span class="t" style="left:711.52px;top:225.00px;font-size:19px;line-height:19px;color:#7a7a7a;letter-spacing:0.000px;transform:scaleX(1.0278)">100</span>
</div>
<svg id="an" width="1252" height="1000" viewBox="0 0 1252 1000" style="left:0;top:0" fill="none" stroke-linecap="round" stroke-linejoin="round"><path d="M949.9 381.8C957.9 378.9 953.6 379.8 962.7 378.6C971.8 377.4 967.0 377.6 977.1 378.1C987.2 378.6 982.5 378.6 993.1 380.2C1003.7 381.8 998.4 381.5 1009.0 382.9C1019.6 384.3 1014.3 384.1 1025.0 384.5C1035.7 384.9 1030.3 384.9 1041.0 384.2C1051.7 383.5 1046.4 383.4 1057.0 382.3C1067.6 381.2 1064.4 381.2 1072.9 381.0C1081.4 380.8 1076.9 380.2 1082.5 381.8C1088.1 383.4 1086.1 382.1 1089.7 385.8C1093.3 389.5 1092.6 388.0 1093.4 393.0C1094.2 398.0 1094.1 394.8 1092.1 400.9C1090.1 407.0 1091.6 404.1 1087.3 411.3C1083.0 418.5 1085.7 415.3 1079.3 422.5C1072.9 429.7 1076.6 426.8 1068.1 432.9C1059.6 439.0 1063.9 436.6 1053.8 440.9C1043.7 445.2 1048.5 443.4 1037.8 445.7C1027.1 448.0 1032.5 447.0 1021.8 447.7C1011.1 448.4 1016.4 448.4 1005.8 447.7C995.2 447.0 1000.5 447.4 989.9 445.7C979.3 444.0 984.6 445.2 973.9 442.5C963.2 439.8 967.5 441.2 957.9 437.7C948.3 434.2 953.1 435.8 945.1 432.1C937.1 428.4 940.1 430.5 934.0 426.5C927.9 422.5 930.1 425.2 926.8 420.1C923.5 415.0 924.6 417.4 924.1 411.3C923.6 405.2 923.0 407.5 925.2 401.7C927.4 395.9 926.3 398.6 930.8 393.8C935.3 389.0 932.4 391.4 938.8 387.4C945.2 383.4 941.9 384.7 949.9 381.8Z" stroke="#f20a0a" stroke-width="2"/>
<path d="M938.8 466.0C944.1 465.6 942.5 465.2 949.9 466.0C957.3 466.8 954.2 466.0 961.1 468.4C968.0 470.8 964.3 470.2 970.7 473.2C977.1 476.2 972.8 475.0 980.3 477.5C987.8 480.0 984.6 479.6 993.1 480.7C1001.6 481.8 997.3 481.6 1005.8 480.7C1014.3 479.8 1010.1 480.5 1018.6 478.0C1027.1 475.5 1022.3 476.7 1031.4 473.2C1040.5 469.7 1036.2 471.1 1045.8 467.6C1055.4 464.1 1050.6 465.4 1060.2 462.8C1069.8 460.2 1063.4 461.2 1074.5 459.9C1085.6 458.6 1080.1 459.1 1093.6 458.9C1107.1 458.7 1100.7 458.7 1115.1 459.3C1129.5 459.9 1124.7 460.3 1136.7 460.8C1148.7 461.3 1141.4 461.5 1151.0 460.8C1160.6 460.1 1157.2 459.4 1165.4 458.6C1173.6 457.8 1167.3 457.7 1175.5 458.3C1183.7 458.9 1180.3 458.6 1189.9 460.4C1199.5 462.2 1195.7 460.7 1204.3 463.7C1212.9 466.7 1209.1 464.4 1215.8 469.4C1222.5 474.4 1219.6 471.8 1224.4 478.8C1229.2 485.8 1227.5 483.1 1230.1 490.3C1232.7 497.5 1232.0 493.1 1232.3 500.3C1232.6 507.5 1232.8 504.1 1230.9 511.8C1229.0 519.5 1230.6 516.1 1226.5 523.3C1222.4 530.5 1225.1 527.2 1218.6 533.4C1212.1 539.6 1215.2 537.0 1207.1 542.0C1199.0 547.0 1203.3 545.0 1194.2 548.5C1185.1 552.0 1191.8 550.5 1179.8 552.4C1167.8 554.3 1172.7 553.3 1158.3 554.2C1143.9 555.1 1151.1 554.7 1136.7 555.2C1122.3 555.7 1129.5 555.8 1115.1 555.7C1100.7 555.6 1108.0 555.7 1093.6 555.0C1079.2 554.3 1082.6 554.2 1072.0 553.5C1061.4 552.8 1073.2 554.0 1061.8 553.0C1050.4 552.0 1052.2 551.8 1037.8 550.6C1023.4 549.4 1032.4 550.2 1018.6 549.4C1004.8 548.6 1009.1 548.9 996.3 548.2C983.5 547.5 989.4 548.5 980.3 547.4C971.2 546.3 976.6 547.4 969.1 545.0C961.6 542.6 965.4 543.5 957.9 540.3C950.4 537.1 953.1 539.0 946.7 535.5C940.3 532.0 943.6 534.4 938.8 529.9C934.0 525.4 936.4 527.8 932.4 521.9C928.4 516.0 929.6 519.2 926.8 512.3C924.0 505.4 924.9 508.5 924.0 501.1C923.1 493.7 923.3 497.4 924.0 490.0C924.7 482.6 924.3 485.2 926.0 478.8C927.7 472.4 926.5 474.6 929.2 470.8C931.9 467.0 930.8 468.9 934.0 467.3C937.2 465.7 933.5 466.4 938.8 466.0Z" stroke="#f20a0a" stroke-width="2"/></svg>
</div>
</body>
</html>
